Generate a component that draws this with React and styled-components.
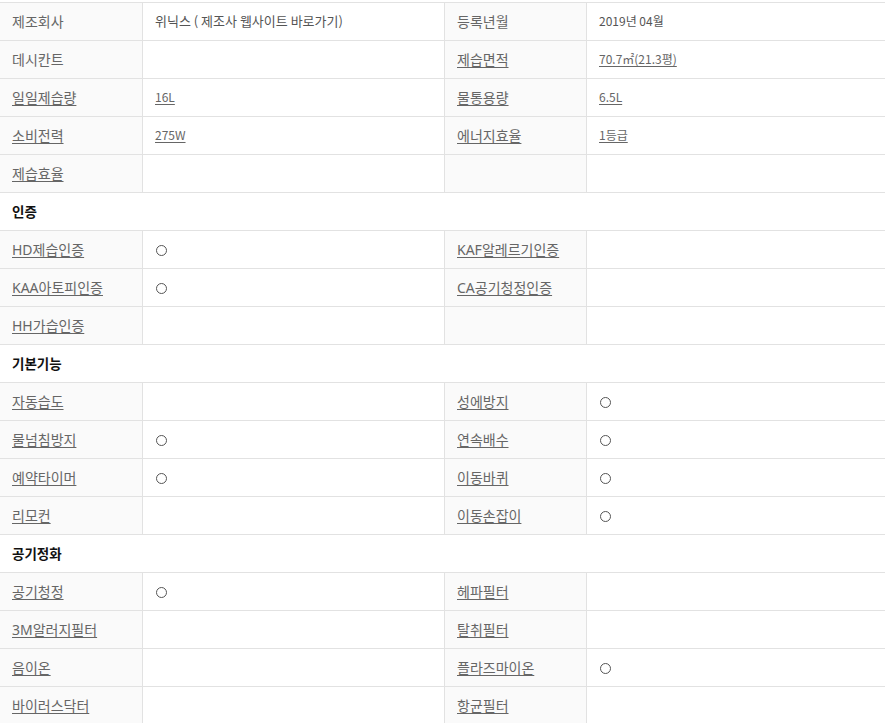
import React from 'react';
import styled, { createGlobalStyle } from 'styled-components';

const GlobalStyle = createGlobalStyle`
  body {
    margin: 0;
    background: #fff;
    font-family: "Noto Sans", "Noto Sans CJK KR", sans-serif;
  }
`;

const SpecTable = styled.table`
  width: 885px;
  margin-top: 2px;
  border-collapse: separate;
  border-spacing: 0;
  table-layout: fixed;
  border-top: 1px solid #e2e2e2;
`;

const Row = styled.tr`
  height: 38px;
`;

const LabelCell = styled.th`
  box-sizing: border-box;
  height: 38px;
  padding: 0 12px 2px;
  text-align: left;
  font-weight: normal;
  font-size: 14px;
  color: #666;
  background: #fafafa;
  border-bottom: 1px solid #e2e2e2;
  border-right: 1px solid #e2e2e2;
  vertical-align: middle;
  white-space: nowrap;
`;

const ValueCell = styled.td`
  box-sizing: border-box;
  height: 38px;
  padding: 0 12px 2px;
  font-family: "Noto Sans CJK KR", "Noto Sans", sans-serif;
  font-size: ${p => p.$size || 12}px;
  color: #555;
  background: #fff;
  border-bottom: 1px solid #e2e2e2;
  border-right: ${p => (p.$last ? 'none' : '1px solid #e2e2e2')};
  vertical-align: middle;
  white-space: nowrap;
`;

const SectionCell = styled.td`
  box-sizing: border-box;
  height: 38px;
  padding: 0 12px 2px;
  font-family: "Noto Sans CJK KR", sans-serif;
  font-size: 13.5px;
  font-weight: bold;
  color: #111;
  border-bottom: 1px solid #e2e2e2;
  vertical-align: middle;
`;

const Link = styled.span`
  color: #666;
  text-decoration: underline;
  text-underline-offset: 2px;
  cursor: pointer;
`;

const Mark = styled.span`
  display: inline-block;
  width: 9px;
  height: 9px;
  margin-left: 1px;
  border: 1px solid #555;
  border-radius: 50%;
  vertical-align: middle;
`;

const Text = ({ v, u }) => {
  if (!v) return null;
  if (v === 'O') return <Mark aria-label="○" />;
  return u ? <Link>{v}</Link> : v;
};

const rows = [
  { a: ['제조회사', false], b: ['위닉스 ( 제조사 웹사이트 바로가기)', false, 13], c: ['등록년월', false], d: ['2019년 04월', false] },
  { a: ['데시칸트', false], b: ['', false], c: ['제습면적', true], d: ['70.7㎡(21.3평)', true] },
  { a: ['일일제습량', true], b: ['16L', true], c: ['물통용량', true], d: ['6.5L', true] },
  { a: ['소비전력', true], b: ['275W', true], c: ['에너지효율', true], d: ['1등급', true] },
  { a: ['제습효율', true], b: ['', false], c: ['', false], d: ['', false] },
  { section: '인증' },
  { a: ['HD제습인증', true], b: ['O'], c: ['KAF알레르기인증', true], d: [''] },
  { a: ['KAA아토피인증', true], b: ['O'], c: ['CA공기청정인증', true], d: [''] },
  { a: ['HH가습인증', true], b: [''], c: [''], d: [''] },
  { section: '기본기능' },
  { a: ['자동습도', true], b: [''], c: ['성에방지', true], d: ['O'] },
  { a: ['물넘침방지', true], b: ['O'], c: ['연속배수', true], d: ['O'] },
  { a: ['예약타이머', true], b: ['O'], c: ['이동바퀴', true], d: ['O'] },
  { a: ['리모컨', true], b: [''], c: ['이동손잡이', true], d: ['O'] },
  { section: '공기정화' },
  { a: ['공기청정', true], b: ['O'], c: ['헤파필터', true], d: [''] },
  { a: ['3M알러지필터', true], b: [''], c: ['탈취필터', true], d: [''] },
  { a: ['음이온', true], b: [''], c: ['플라즈마이온', true], d: ['O'] },
  { a: ['바이러스닥터', true], b: [''], c: ['항균필터', true], d: [''] },
];

export default function App() {
  return (
    <>
      <GlobalStyle />
      <SpecTable>
        <colgroup>
          <col style={{ width: 143 }} />
          <col style={{ width: 302 }} />
          <col style={{ width: 142 }} />
          <col style={{ width: 298 }} />
        </colgroup>
        <tbody>
          {rows.map((r, i) =>
            r.section ? (
              <Row key={i}>
                <SectionCell colSpan={4}>{r.section}</SectionCell>
              </Row>
            ) : (
              <Row key={i}>
                <LabelCell><Text v={r.a[0]} u={r.a[1]} /></LabelCell>
                <ValueCell $size={r.b[2]}><Text v={r.b[0]} u={r.b[1]} /></ValueCell>
                <LabelCell><Text v={r.c[0]} u={r.c[1]} /></LabelCell>
                <ValueCell $last><Text v={r.d[0]} u={r.d[1]} /></ValueCell>
              </Row>
            )
          )}
        </tbody>
      </SpecTable>
    </>
  );
}
